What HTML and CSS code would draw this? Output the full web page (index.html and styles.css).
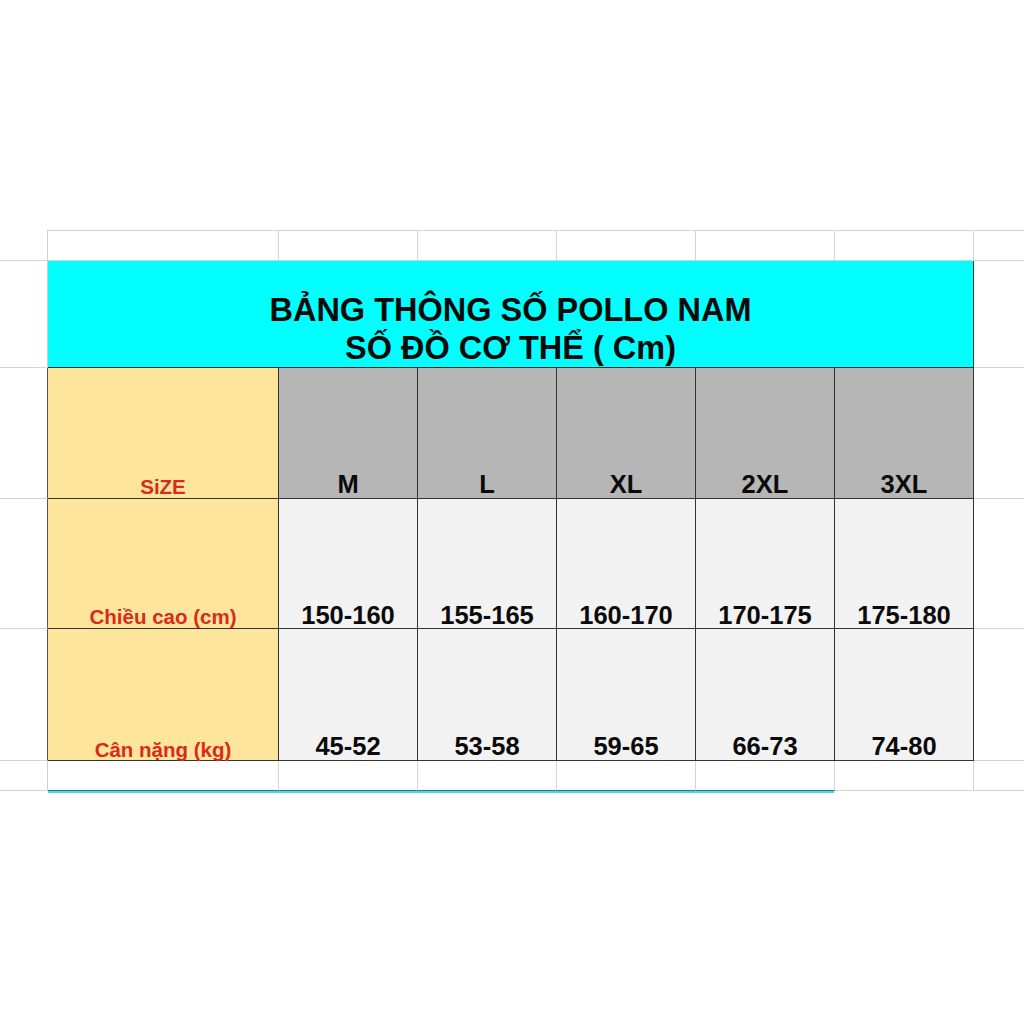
FILE: index.html
```html
<!DOCTYPE html>
<html lang="vi">
<head>
<meta charset="utf-8">
<title>Bảng thông số Pollo nam</title>
<link rel="stylesheet" href="styles.css">
</head>
<body>
<div class="sheet">
  <!-- row 1 -->
  <div class="c gut r1 edge"></div>
  <div class="c r1 blank"></div>
  <div class="c r1 blank"></div>
  <div class="c r1 blank"></div>
  <div class="c r1 blank"></div>
  <div class="c r1 blank"></div>
  <div class="c r1 blank"></div>
  <div class="c gutr r1"></div>

  <!-- row 2 -->
  <div class="c gut edge-cyan"></div>
  <div class="c title"><div class="title-text">BẢNG THÔNG SỐ POLLO NAM<br>SỐ ĐỒ CƠ THỂ ( Cm)</div></div>
  <div class="c gutr"></div>

  <!-- row 3 -->
  <div class="c gut edge-dark"></div>
  <div class="c label">SiZE</div>
  <div class="c head">M</div>
  <div class="c head">L</div>
  <div class="c head">XL</div>
  <div class="c head">2XL</div>
  <div class="c head">3XL</div>
  <div class="c gutr"></div>

  <!-- row 4 -->
  <div class="c gut edge-dark"></div>
  <div class="c label">Chiều cao (cm)</div>
  <div class="c val">150-160</div>
  <div class="c val">155-165</div>
  <div class="c val">160-170</div>
  <div class="c val">170-175</div>
  <div class="c val">175-180</div>
  <div class="c gutr"></div>

  <!-- row 5 -->
  <div class="c gut edge-dark"></div>
  <div class="c label low">Cân nặng (kg)</div>
  <div class="c val low">45-52</div>
  <div class="c val low">53-58</div>
  <div class="c val low">59-65</div>
  <div class="c val low">66-73</div>
  <div class="c val low">74-80</div>
  <div class="c gutr"></div>

  <!-- row 6 -->
  <div class="c gut edge"></div>
  <div class="c blank teal"></div>
  <div class="c blank teal"></div>
  <div class="c blank teal"></div>
  <div class="c blank teal"></div>
  <div class="c blank teal"></div>
  <div class="c blank"></div>
  <div class="c gutr"></div>
</div>
<div class="under-row">
  <div class="under-gap"></div>
  <div class="under-line"></div>
</div>
</body>
</html>
```

FILE: styles.css
```css
* { box-sizing: border-box; }

html, body {
  margin: 0;
  padding: 0;
  background: #ffffff;
}

body {
  font-family: "Liberation Sans", Arial, sans-serif;
}

.sheet {
  margin-top: 230px;
  display: grid;
  grid-template-columns: 48px 231px repeat(5, 139px) 1fr;
  grid-template-rows: 31px 107px 131px 130px 132px 30px;
}

.c {
  border-bottom: 1px solid #d4d4d4;
}

.gut { }
.edge { border-right: 1px solid #cfcfcf; }
.edge-cyan { border-right: 1px solid #b8d6d8; }
.edge-dark { border-right: 1px solid #555555; }

.r1 { border-top: 1px solid #d4d4d4; }
.gut.r1 { border-top: none; }

.blank {
  background: #ffffff;
  border-right: 1px solid #d4d4d4;
}

.teal { border-bottom-color: #3d6f74; }

.title {
  grid-column: 2 / 8;
  background: #00ffff;
  border-right: 1px solid #2c3a3a;
  border-bottom: 1px solid #2a2a2a;
  display: flex;
  align-items: flex-end;
  justify-content: center;
}

.title-text {
  font-weight: bold;
  font-size: 32.5px;
  line-height: 38px;
  color: #0a0a0a;
  text-align: center;
  padding-bottom: 0;
}

.label, .head, .val {
  display: flex;
  align-items: flex-end;
  justify-content: center;
  font-weight: bold;
  line-height: 1;
  border-right: 1px solid #333333;
  border-bottom: 1px solid #333333;
  white-space: nowrap;
}

.label {
  background: #fee59c;
  color: #d92a1c;
  font-size: 20.5px;
  padding-bottom: 1px;
}

.head {
  background: #b6b6b6;
  color: #0a0a0a;
  font-size: 25.5px;
  padding-bottom: 1px;
}

.val {
  background: #f2f2f2;
  color: #0a0a0a;
  font-size: 25.5px;
  padding-bottom: 0;
}

.val.low { padding-bottom: 1px; }
.label.low { padding-bottom: 0; }

.under-row {
  display: flex;
}

.under-gap { width: 48px; }

.under-line {
  width: 786px;
  height: 2px;
  background: #35e0ea;
}
```
